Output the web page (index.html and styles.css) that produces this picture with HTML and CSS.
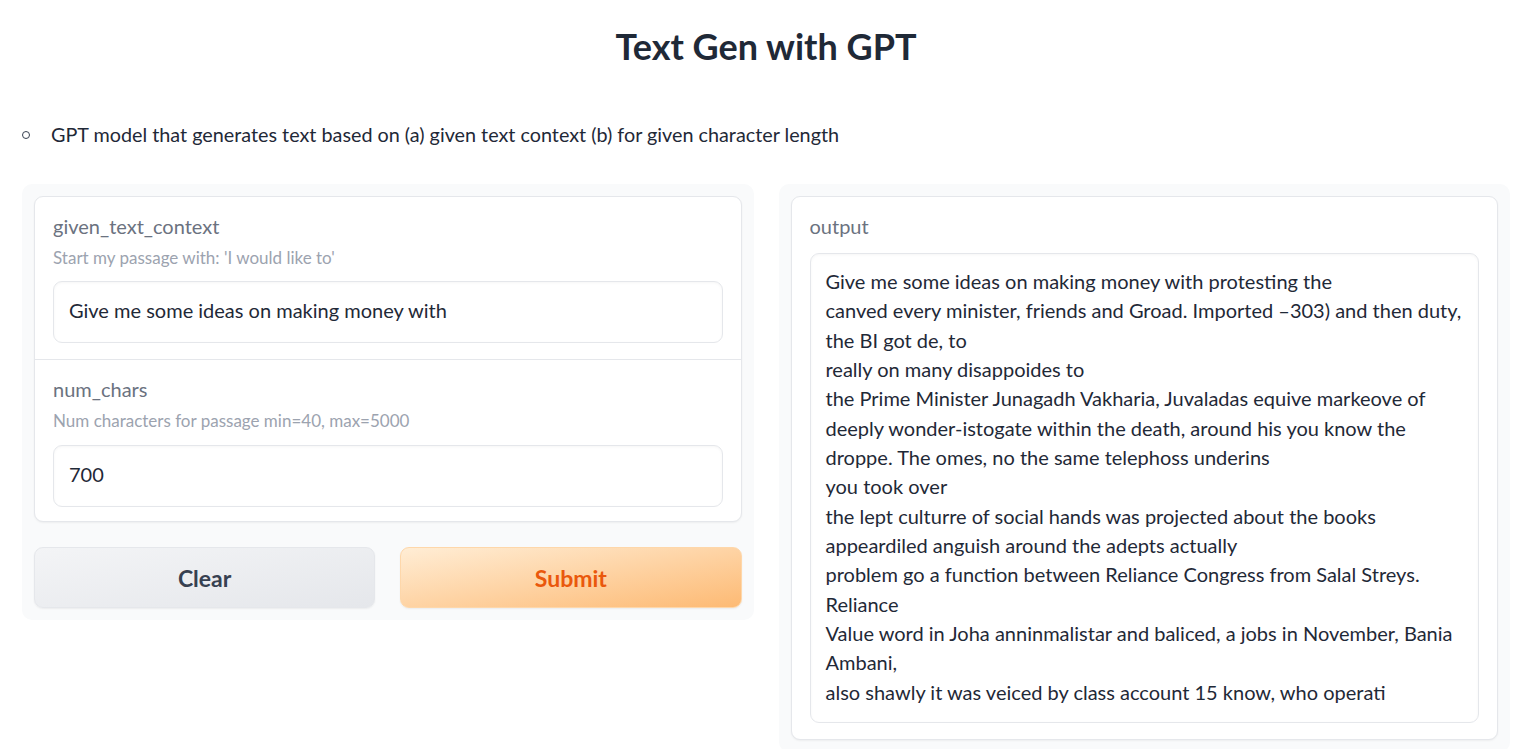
FILE: index.html
```html
<!DOCTYPE html>
<html lang="en">
<head>
<meta charset="utf-8">
<title>Text Gen with GPT</title>
<link rel="stylesheet" href="styles.css">
</head>
<body>
<div class="app">
  <h1 class="title">Text Gen with GPT</h1>
  <ul class="desc">
    <li>GPT model that generates text based on (a) given text context (b) for given character length</li>
  </ul>
  <div class="row">
    <div class="panel">
      <div class="card">
        <div class="block">
          <div class="label">given_text_context</div>
          <div class="info">Start my passage with: 'I would like to'</div>
          <div class="input">Give me some ideas on making money with</div>
        </div>
        <div class="block block-sep block-last">
          <div class="label">num_chars</div>
          <div class="info">Num characters for passage min=40, max=5000</div>
          <div class="input">700</div>
        </div>
      </div>
      <div class="buttons">
        <button class="btn btn-secondary">Clear</button>
        <button class="btn btn-primary">Submit</button>
      </div>
    </div>
    <div class="panel">
      <div class="card">
        <div class="block">
          <div class="label">output</div>
          <div class="textarea"><span class="ln">Give me some ideas on making money with protesting the</span><span class="ln">canved every minister, friends and Groad. Imported –303) and then duty,</span><span class="ln">the BI got de, to</span><span class="ln">really on many disappoides to</span><span class="ln">the Prime Minister Junagadh Vakharia, Juvaladas equive markeove of</span><span class="ln">deeply wonder-istogate within the death, around his you know the</span><span class="ln">droppe. The omes, no the same telephoss underins</span><span class="ln">you took over</span><span class="ln">the lept culturre of social hands was projected about the books</span><span class="ln">appeardiled anguish around the adepts actually</span><span class="ln">problem go a function between Reliance Congress from Salal Streys.</span><span class="ln">Reliance</span><span class="ln">Value word in Joha anninmalistar and baliced, a jobs in November, Bania</span><span class="ln">Ambani,</span><span class="ln">also shawly it was veiced by class account 15 know, who operati</span></div>
        </div>
      </div>
    </div>
  </div>
</div>
</body>
</html>
```

FILE: styles.css
```css
* { box-sizing: border-box; }
html, body { margin: 0; padding: 0; background: #ffffff; }
body {
  font-family: Lato, "Liberation Sans", sans-serif;
  color: #1f2937;
}
.app {
  padding: 0 23px 0 22px;
}
.title {
  margin: 0;
  padding-top: 24px;
  height: 88px;
  text-align: center;
  font-size: 36px;
  font-weight: 700;
  line-height: 44px;
  color: #1f2937;
}
.desc {
  margin: 31px 0 0 0;
  padding: 0;
  list-style: none;
  font-size: 19.8px;
  line-height: 30px;
  color: #1f2937;
}
.desc li {
  display: flex;
  align-items: center;
}
.desc li::before {
  content: "";
  flex: none;
  width: 6px;
  height: 6px;
  border: 1.3px solid #374151;
  border-radius: 50%;
  margin: 1px 21px 0 0;
}
.row {
  display: flex;
  gap: 25px;
  align-items: flex-start;
  margin-top: 35px;
}
.panel {
  flex: 1;
  background: #f9fafb;
  border-radius: 10px;
  padding: 12px;
}
.card {
  background: #fff;
  border: 1px solid #e5e7eb;
  border-radius: 9px;
  box-shadow: 0 1px 2px rgba(0,0,0,0.05);
  overflow: hidden;
}
.block {
  padding: 16px 18px 16px 18px;
}
.block-sep {
  border-top: 1px solid #e5e7eb;
}
.block-last {
  padding-bottom: 14px;
}
.label {
  font-size: 20px;
  line-height: 26px;
  margin-bottom: 4px;
  color: #6b7280;
}
.info {
  font-size: 17px;
  line-height: 30px;
  color: #9ca3af;
}
.input {
  margin-top: 8px;
  height: 62px;
  border: 1px solid #e5e7eb;
  border-radius: 9px;
  box-shadow: inset 0 1px 3px rgba(0,0,0,0.04);
  padding: 0 15px 4px 15px;
  display: flex;
  align-items: center;
  font-size: 20px;
  color: #1f2937;
}
.block-last .input {
  margin-top: 9px;
}
.buttons {
  display: flex;
  gap: 25px;
  margin-top: 25px;
}
.btn {
  flex: 1;
  height: 61px;
  border-radius: 9px;
  font-family: Lato, "Liberation Sans", sans-serif;
  font-size: 23px;
  font-weight: 700;
  cursor: pointer;
  box-shadow: 0 1px 2px rgba(0,0,0,0.06);
}
.btn-secondary {
  background: linear-gradient(to bottom right, #f3f4f6, #e5e7eb);
  border: 1px solid #e5e7eb;
  color: #374151;
}
.btn-primary {
  background: linear-gradient(to bottom right, #ffedd5, #fdba74);
  border: 1px solid #fed7aa;
  color: #ea580c;
}
.textarea {
  margin-top: 14px;
  border: 1px solid #e5e7eb;
  border-radius: 9px;
  box-shadow: inset 0 1px 3px rgba(0,0,0,0.04);
  padding: 13px 15px 15px 15px;
  font-size: 20px;
  line-height: 29.35px;
  color: #1f2937;
}
.ln { display: block; white-space: nowrap; }
```
